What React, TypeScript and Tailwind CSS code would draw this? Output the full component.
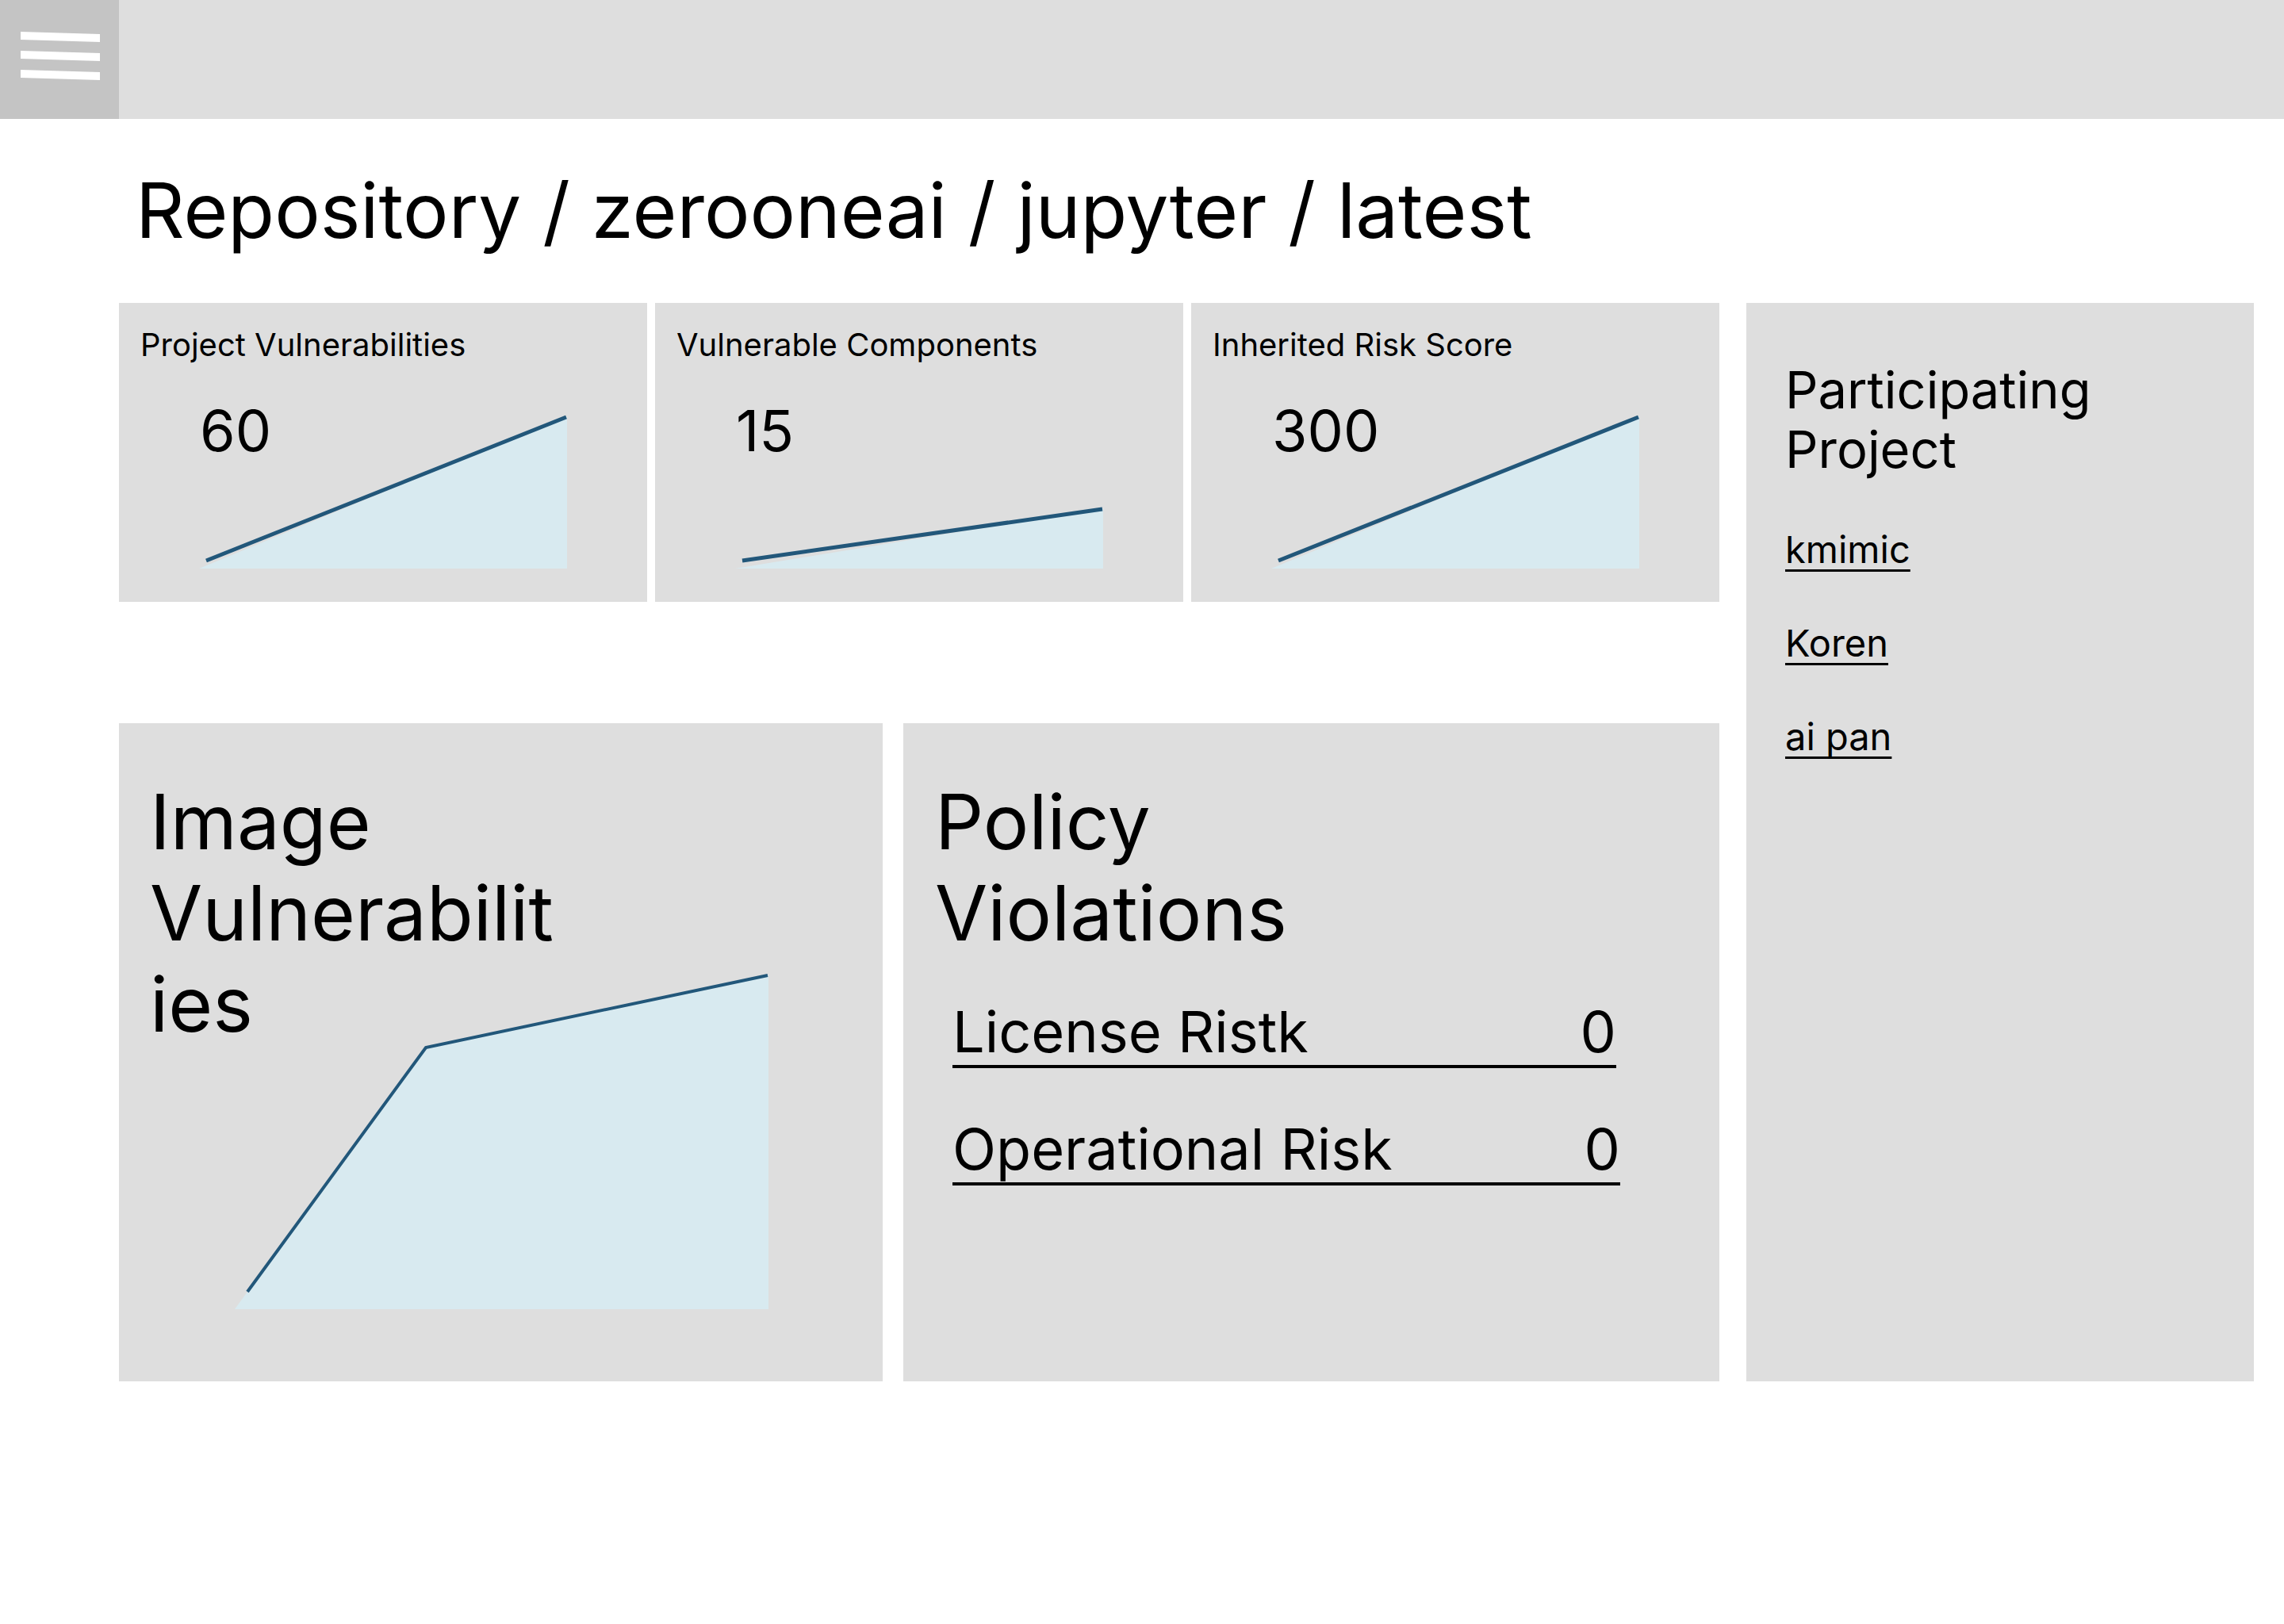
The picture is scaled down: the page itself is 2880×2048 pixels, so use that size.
const cards = [
  { label: "Project Vulnerabilities", value: "60", top: 0 },
  { label: "Vulnerable Components", value: "15", top: 116 },
  { label: "Inherited Risk Score", value: "300", top: 0 },
];

const projects = ["kmimic", "Koren", "ai pan"];

const Sparkline = ({ top }: { top: number }) => (
  <svg
    width="464"
    height="192"
    viewBox="0 0 464 192"
    className="col-start-1 row-start-1 ml-[74px] mt-[66px] self-start overflow-visible"
  >
    <polygon points={`0,192 464,192 464,${top}`} fill="#d8eaf0" />
    <line x1="9" y1="182" x2="463" y2={top + 1} stroke="#22577a" strokeWidth="5" />
  </svg>
);

const StatCard = ({ label, value, top }: { label: string; value: string; top: number }) => (
  <div className="h-[377px] bg-[#dedede] pl-[27px] pt-[29px]">
    <p className="text-[40px] leading-[48px]">{label}</p>
    <div className="grid">
      <p className="col-start-1 row-start-1 ml-[75px] mt-[48px] self-start text-[72px] leading-[72px]">{value}</p>
      <Sparkline top={top} />
    </div>
  </div>
);

const RiskRow = ({ label, value, width }: { label: string; value: string; width: string }) => (
  <div className={`ml-[22px] flex items-end justify-between border-b-4 border-black pb-[6px] text-[72px] leading-[72px] ${width}`}>
    <span>{label}</span>
    <span>{value}</span>
  </div>
);

export default function App() {
  return (
    <div className="min-h-screen bg-white font-['Inter',sans-serif] text-black">
      <header className="flex h-[150px] bg-[#dedede]">
        <div className="w-[150px] bg-[#c4c4c4] pl-[26px] pt-[40px]">
          <svg width="100" height="61" viewBox="0 0 100 61">
            <polygon points="0,0 100,3 100,13 0,10" fill="#fff" />
            <polygon points="0,24 100,27 100,37 0,34" fill="#fff" />
            <polygon points="0,48 100,51 100,61 0,58" fill="#fff" />
          </svg>
        </div>
      </header>

      <main className="pl-[150px] pr-[38px]">
        <h1 className="ml-[21px] mt-[58px] text-[96px] font-normal leading-[115px]">
          Repository / zerooneai / jupyter / latest
        </h1>

        <div className="mt-[59px] flex gap-[34px]">
          <div className="flex w-[2018px] flex-col gap-[153px]">
            <div className="grid grid-cols-3 gap-[10px]">
              {cards.map((c) => (
                <StatCard key={c.label} {...c} />
              ))}
            </div>

            <div className="grid h-[830px] grid-cols-[963px_1fr] gap-[26px]">
              <div className="grid bg-[#dedede]">
                <h2 className="col-start-1 row-start-1 ml-[39px] mt-[67px] w-[515px] self-start text-[96px] font-normal leading-[115px] [overflow-wrap:anywhere]">
                  Image Vulnerabilities
                </h2>
                <svg
                  width="673"
                  height="422"
                  viewBox="0 0 673 422"
                  className="col-start-1 row-start-1 ml-[146px] mt-[317px] self-start overflow-visible"
                >
                  <polygon points="0,422 241,92 673,0 673,422" fill="#d8eaf0" />
                  <polyline
                    points="16,400 241,92 672,1"
                    fill="none"
                    stroke="#22577a"
                    strokeWidth="4"
                  />
                </svg>
              </div>

              <div className="flex flex-col bg-[#dedede] pl-[40px] pt-[67px]">
                <h2 className="w-[510px] text-[96px] font-normal leading-[115px]">Policy Violations</h2>
                <div className="mt-[56px]">
                  <RiskRow label="License Ristk" value="0" width="w-[837px]" />
                </div>
                <div className="mt-[66px]">
                  <RiskRow label="Operational Risk" value="0" width="w-[842px]" />
                </div>
              </div>
            </div>
          </div>

          <aside className="flex-1 bg-[#dedede] pl-[49px] pr-[49px] pt-[72px]">
            <h2 className="text-[65px] font-normal leading-[75px]">Participating Project</h2>
            <ul className="mt-[30px]">
              {projects.map((p) => (
                <li key={p} className="text-[47px] leading-[118px]">
                  <a className="underline decoration-[3px] underline-offset-[8px] [text-decoration-skip-ink:none]">{p}</a>
                </li>
              ))}
            </ul>
          </aside>
        </div>
      </main>
    </div>
  );
}
